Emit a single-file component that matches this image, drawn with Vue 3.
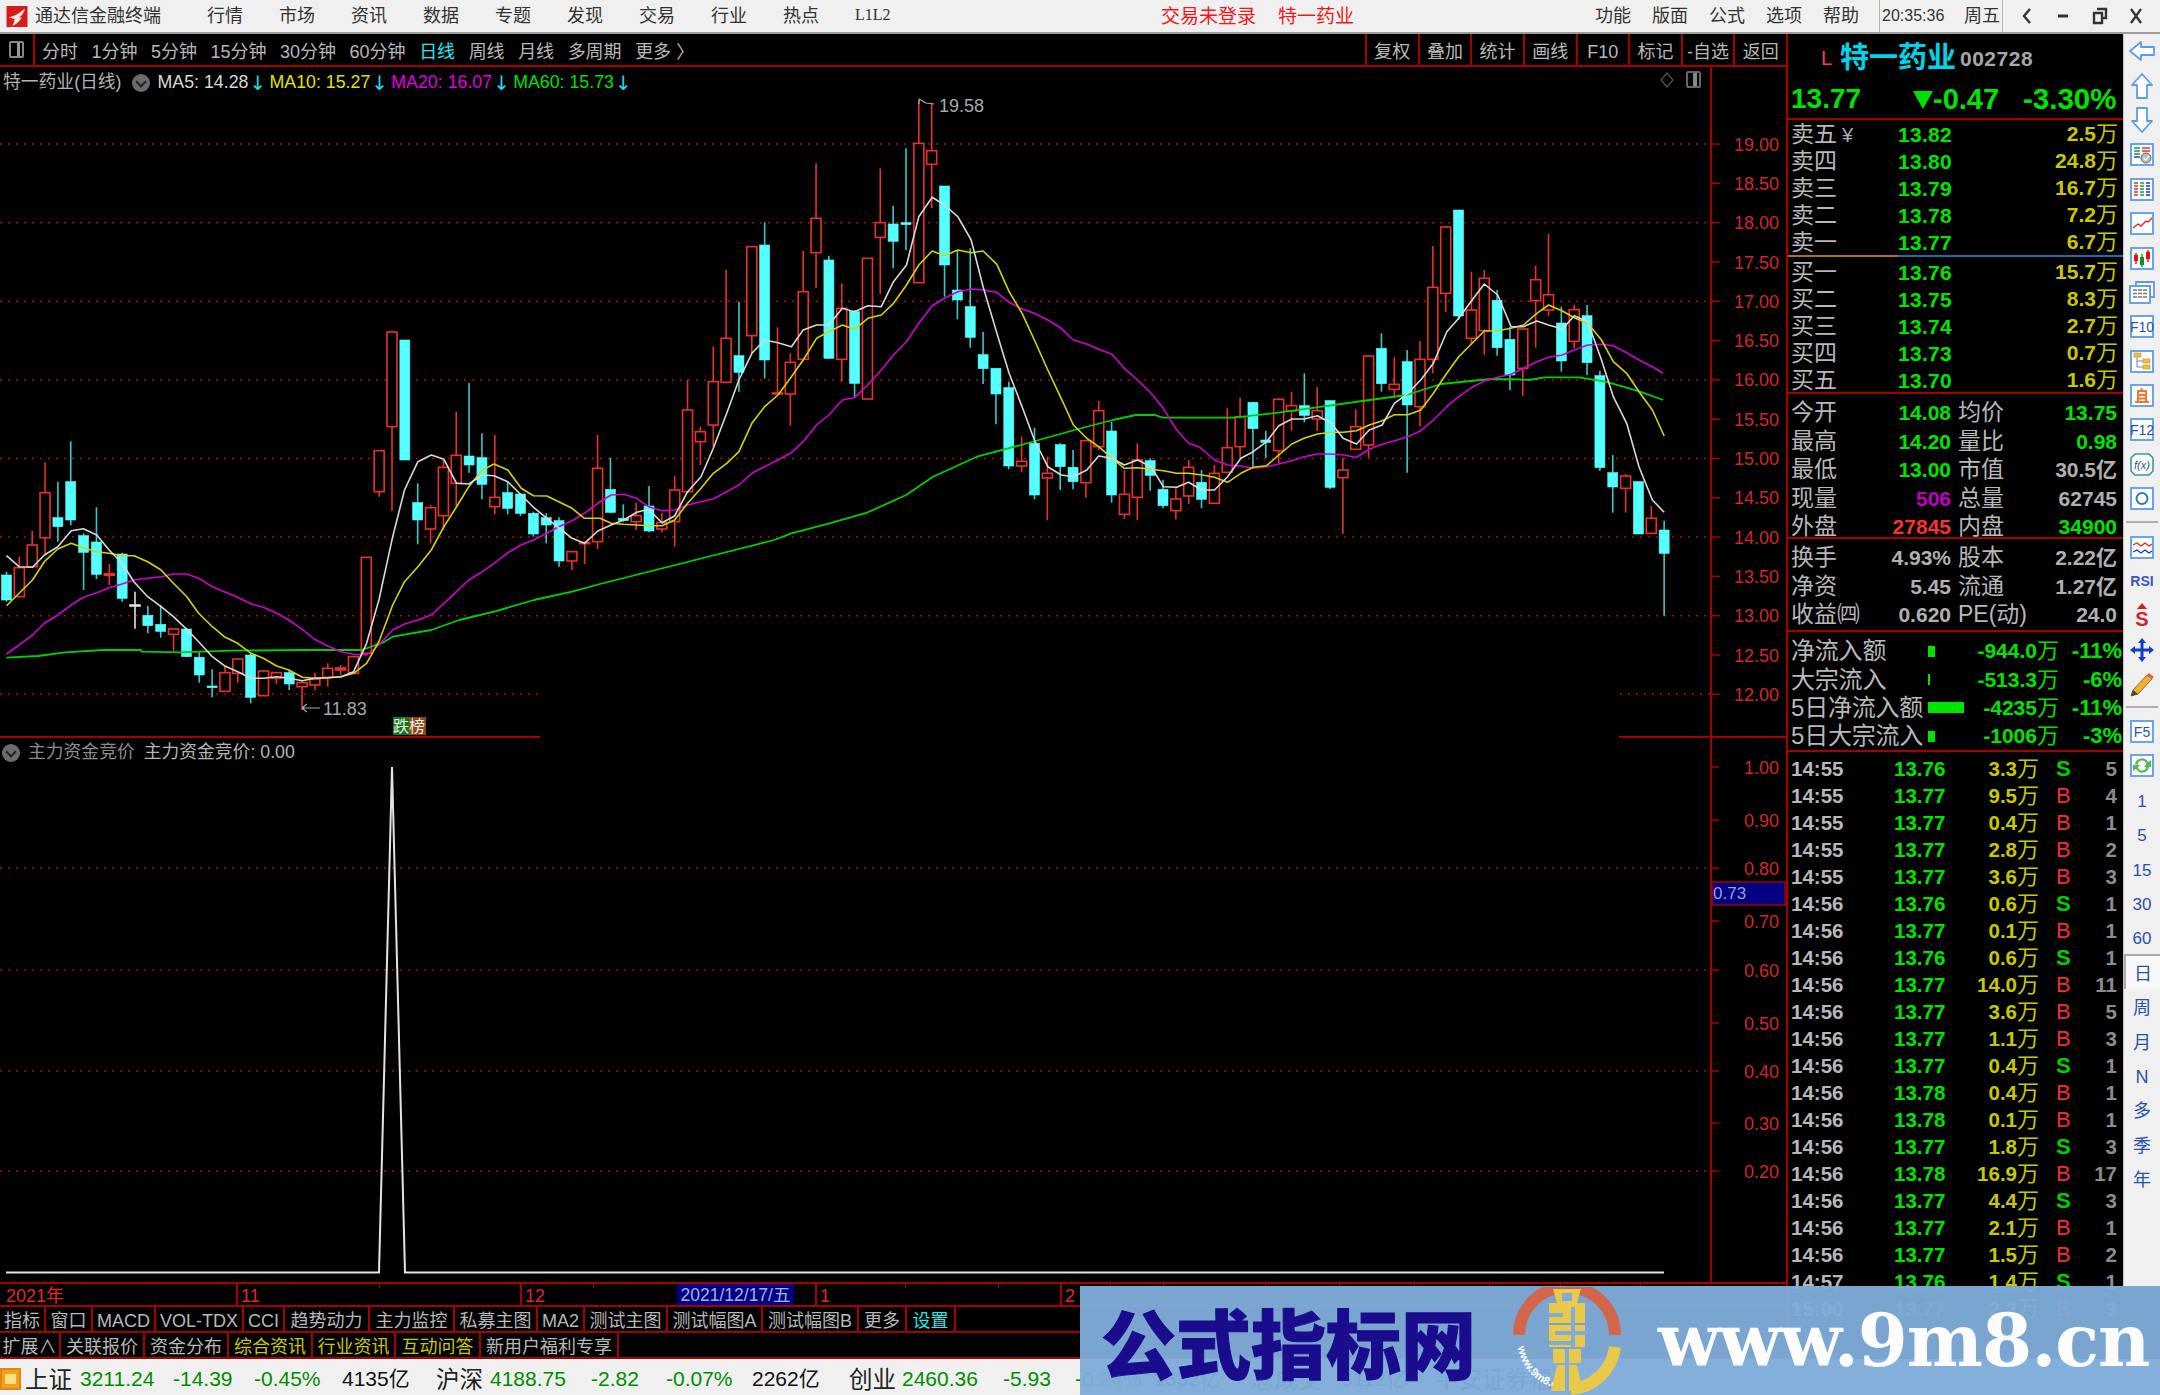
<script setup>
const candleX = (i) => 6.5 + 12.85 * i;
const sx = 1 / 2.613;

// [type, high, top, bottom, low] read per crop; r = up, c = down, w = flat
const part1 = [
  ["c",515,525,600,605],["r",470,503,590,590],["r",393,435,500,500],["r",187,278,413,462],["c",245,353,380,425],
  ["c",124,245,360,375],["c",400,407,457,570],["c",322,426,523,537],["f",492,521,526,555],["c",458,462,595,605],
  ["w",575,615,618,686],["c",618,646,677,700],["c",615,673,694,713],["r",687,687,703,755],["c",685,687,770,770],
  ["c",757,772,825,848],["c",808,858,863,892],["r",796,818,874,874],["r",777,777,820,848],["c",760,765,892,910],
  ["r",813,813,887,887],["r",818,818,835,852],["c",810,818,852,870],["r",843,848,860,930],["r",818,838,855,870],
  ["r",790,805,832,860],["f",795,804,810,825],["r",768,770,820,820],["r",472,472,760,765],["r",152,152,275,290],
  ["r",-204,-204,80,333],["c",-180,-180,180,180],["c",250,308,360,433],["r",315,323,387,430],["r",178,202,347,390],
  ["r",35,166,250,320],["c",-51,168,195,218],["c",100,173,253,298],["r",105,292,320,343],["c",245,278,325,343],
  ["c",280,282,340,348],["c",335,340,402,410],["c",340,353,375,430],["c",352,362,483,500],["r",455,455,483,510],
  ["f",425,427,431,492],["r",105,205,425,447],
];
const part2 = [
  ["c",1133,1228,1297,1300],["c",1273,1315,1322,1325],["r",1268,1307,1325,1350],["c",1218,1278,1353,1357],
  ["r",1300,1328,1347,1357],["r",1187,1230,1325,1400],["r",900,990,1235,1240],["r",1040,1055,1085,1155],
  ["r",800,905,1035,1100],["r",570,775,907,910],["c",665,827,877,935],["r",500,500,767,820],["c",427,495,840,895],
  ["f",742,939,942,942],["r",820,847,942,1037],["r",513,635,838,840],["r",250,415,518,623],["c",527,540,835,835],
  ["r",610,685,838,905],["c",690,695,910,953],["r",535,535,957,957],["r",265,428,472,642],["c",377,432,484,565],
  ["c",205,428,434,510],["r",60,190,608,608],["r",70,212,253,385],["c",318,318,555,650],["c",510,630,660,718],
  ["c",505,680,772,803],["c",755,824,866,912],["c",865,865,942,1033],["c",905,923,1158,1168],["r",1070,1144,1158,1177],
  ["c",1043,1090,1245,1258],["r",1130,1180,1194,1320],["c",1090,1094,1160,1230],["c",1110,1162,1205,1228],
  ["r",1080,1082,1208,1253],["r",963,992,1100,1110],["c",1025,1053,1245,1268],["r",1170,1243,1303,1317],
  ["r",1090,1140,1252,1320],["c",1135,1142,1186,1232],["c",1200,1228,1277,1285],["r",1225,1257,1292,1318],
  ["r",1140,1162,1248,1272],
];
const part3 = [
  ["c",870,907,958,985],["r",855,880,970,970],["r",685,803,877,877],["r",653,710,800,835],["c",665,667,746,860],
  ["c",752,780,787,833],["r",655,658,812,850],["r",635,677,693,752],["c",580,677,706,727],["r",622,692,717,752],
  ["c",662,662,922,927],["r",833,870,893,1062],["r",688,740,808,808],["r",525,528,795,832],["c",460,505,611,635],
  ["r",532,613,628,655],["c",510,545,675,878],["r",483,538,680,738],["r",198,322,538,580],["r",138,141,340,397],
  ["c",90,90,408,420],["r",275,390,475,495],["r",270,295,452,525],["c",330,361,503,527],["c",440,478,585,630],
  ["r",447,447,565,647],["r",257,299,362,503],["r",162,344,390,408],["c",380,429,543,575],["r",375,389,484,505],
  ["c",375,407,548,585],["c",572,587,863,873],["c",825,878,921,998],["r",882,888,925,998],["c",905,905,1062,1062],
  ["r",978,1015,1060,1060],["c",1022,1050,1120,1307],
];
const scaleRows = (rows, y0) => rows.map(([t, a, b, c, d]) => [t, a / 3 + y0, b / 3 + y0, c / 3 + y0, d / 3 + y0]);
const candles = [...scaleRows(part1, 400), ...scaleRows(part2, 80), ...scaleRows(part3, 180)].map((r, i) => ({
  x: candleX(i),
  type: r[0],
  high: r[1],
  top: r[2],
  bottom: r[3],
  low: r[4],
}));

const pts = (x0, y0, list) => {
  const out = [];
  for (let i = 0; i < list.length; i += 2) out.push((x0 + list[i] * sx).toFixed(1) + "," + (y0 + list[i + 1] / 3).toFixed(1));
  return out.join(" ");
};
const line = (a, b, c) => pts(0, 400, a) + " " + pts(600, 80, b) + " " + pts(1200, 180, c);

const ma5 = line(
  [17,467,50,500,85,502,116,465,151,440,186,392,218,386,253,405,285,450,319,490,350,545,386,590,421,620,453,650,488,688,519,725,555,770,586,797,621,815,656,835,688,835,723,830,755,835,790,842,821,835,856,833,891,830,924,815,958,730,990,600,1026,410,1057,270,1092,185,1127,165,1160,178,1193,250,1225,252,1260,225,1291,227,1327,245,1362,285,1394,322,1429,355,1460,383,1495,415,1527,430,1562,393],
  [29,1335,62,1320,96,1297,127,1288,162,1328,195,1308,229,1235,264,1190,296,1105,331,1000,363,900,397,820,430,780,465,788,500,800,531,750,566,735,598,735,633,685,665,695,700,677,735,680,767,605,801,555,833,410,868,352,900,375,935,410,970,480,1001,620,1037,760,1069,880,1103,980,1135,1080,1170,1160,1205,1185,1237,1190,1272,1170,1303,1128,1338,1135,1370,1155,1405,1140,1440,1160,1472,1220,1507,1222,1538,1207],
  [5,930,38,930,72,890,107,835,139,815,174,785,206,737,240,717,272,717,307,707,343,730,374,775,409,792,442,750,476,735,508,670,543,640,577,600,610,550,645,455,676,415,711,360,743,312,778,345,813,440,845,440,880,423,911,435,947,447,978,407,1013,425,1049,540,1080,650,1115,730,1147,860,1182,960,1213,997]
);
const ma10 = line(
  [17,617,50,580,85,540,116,485,151,447,186,430,218,443,253,455,285,460,319,467,350,467,386,485,421,510,453,550,488,590,519,640,555,680,586,710,621,730,656,760,688,775,723,798,755,810,790,832,821,835,856,833,891,830,924,820,958,790,990,725,1026,615,1057,545,1092,500,1127,450,1160,380,1193,320,1225,260,1260,210,1291,192,1327,210,1362,265,1394,287,1429,288,1460,305,1495,325,1527,355,1568,355],
  [29,1330,62,1333,96,1335,127,1337,162,1337,195,1320,229,1270,264,1225,296,1180,331,1150,363,1115,397,1030,430,980,465,945,500,890,531,840,566,775,598,755,633,735,665,748,700,715,735,705,767,670,801,615,833,555,868,513,900,527,935,510,970,518,1001,513,1037,553,1069,635,1103,700,1135,780,1170,870,1205,955,1237,1035,1272,1075,1303,1100,1338,1135,1370,1165,1405,1163,1440,1168,1472,1172,1507,1180,1538,1180],
  [5,885,38,892,72,907,107,880,139,862,174,857,206,825,240,792,272,775,307,762,343,757,374,757,409,752,442,735,476,722,508,704,543,704,577,690,610,640,645,580,676,530,711,490,743,453,778,452,813,445,845,435,880,400,911,375,947,393,978,413,1013,430,1049,480,1080,545,1115,580,1147,635,1182,690,1213,768]
);
const ma20 = line(
  [17,762,50,735,85,705,116,670,151,645,186,615,218,592,253,578,285,563,319,552,350,540,386,535,421,530,453,522,488,522,519,535,555,560,586,575,621,592,656,612,688,622,723,640,755,660,790,688,821,717,856,738,891,755,924,763,958,765,990,735,1026,690,1057,672,1092,660,1127,645,1160,610,1193,575,1225,540,1260,515,1291,490,1327,458,1362,435,1394,420,1429,400,1460,380,1495,362,1527,340,1568,305],
  [29,1245,62,1243,96,1255,127,1280,162,1292,195,1290,229,1275,264,1265,296,1257,331,1235,363,1215,397,1180,430,1160,465,1140,500,1118,531,1085,566,1035,598,1005,633,960,665,953,700,915,735,870,767,825,801,785,833,730,868,677,900,655,935,635,970,627,1001,630,1037,637,1069,667,1103,687,1135,700,1170,720,1205,745,1237,780,1272,792,1303,808,1338,823,1370,865,1405,900,1440,940,1472,985,1507,1050,1538,1090],
  [0,802,38,840,72,855,107,858,139,865,174,860,206,852,240,842,272,830,307,822,343,822,374,825,409,832,442,808,476,793,508,782,543,770,577,752,610,720,645,680,676,650,711,622,743,603,778,592,813,583,845,565,880,545,911,532,947,525,978,510,1013,495,1049,493,1080,497,1115,518,1147,540,1182,560,1210,580]
);
const ma60 = line(
  [17,773,100,768,170,757,268,750,368,750,370,755,470,757,605,752,800,750,945,750,1000,728,1026,710,1127,690,1200,660,1291,635,1395,600,1495,575,1568,552],
  [455,1380,500,1360,600,1330,700,1297,800,1245,870,1190,985,1130,1100,1095,1240,1050,1340,1020,1400,1005,1450,1005,1470,1013,1568,1013],
  [0,713,90,713,190,700,300,683,424,663,540,645,630,612,760,597,830,598,860,600,900,592,990,592,1060,605,1150,635,1210,660]
);

const priceY = (p) => 615.7 - (p - 13) * 78.6;
const upperAxis = ["19.00","18.50","18.00","17.50","17.00","16.50","16.00","15.50","15.00","14.50","14.00","13.50","13.00","12.50","12.00"].map((t) => ({ t, y: priceY(+t) }));
const upperGrid = [19, 18, 17, 16, 15, 14, 13].map(priceY);
const lowerAxis = [["1.00",767],["0.90",820],["0.80",868],["0.70",921],["0.60",970],["0.50",1023],["0.40",1071],["0.30",1123],["0.20",1171]];
const lowerGrid = [868, 970, 1071, 1171];

const periods = [["分时"],["1分钟"],["5分钟"],["15分钟"],["30分钟"],["60分钟"],["日线",true],["周线"],["月线"],["多周期"]];
const tools = ["复权","叠加","统计","画线","F10","标记","-自选","返回"];
const menus = ["行情","市场","资讯","数据","专题","发现","交易","行业","热点"];
const sideMenus = ["功能","版面","公式","选项","帮助"];

const sells = [["卖五","13.82","2.5"],["卖四","13.80","24.8"],["卖三","13.79","16.7"],["卖二","13.78","7.2"],["卖一","13.77","6.7"]];
const buys = [["买一","13.76","15.7"],["买二","13.75","8.3"],["买三","13.74","2.7"],["买四","13.73","0.7"],["买五","13.70","1.6"]];
const statsA = [
  ["今开","14.08","g","均价","13.75","g"],
  ["最高","14.20","g","量比","0.98","g"],
  ["最低","13.00","g","市值","30.5亿","n"],
  ["现量","506","m","总量","62745","n"],
  ["外盘","27845","r","内盘","34900","g"],
];
const statsB = [
  ["换手","4.93%","n","股本","2.22亿","n"],
  ["净资","5.45","n","流通","1.27亿","n"],
  ["收益㈣","0.620","n","PE(动)","24.0","n"],
];
const flows = [
  ["净流入额",7,"-944.0","-11%"],
  ["大宗流入",2,"-513.3","-6%"],
  ["5日净流入额",36,"-4235","-11%"],
  ["5日大宗流入",7,"-1006","-3%"],
];
const ticks = [
  ["14:55","13.76","3.3","S","5"],["14:55","13.77","9.5","B","4"],["14:55","13.77","0.4","B","1"],["14:55","13.77","2.8","B","2"],
  ["14:55","13.77","3.6","B","3"],["14:56","13.76","0.6","S","1"],["14:56","13.77","0.1","B","1"],["14:56","13.76","0.6","S","1"],
  ["14:56","13.77","14.0","B","11"],["14:56","13.77","3.6","B","5"],["14:56","13.77","1.1","B","3"],["14:56","13.77","0.4","S","1"],
  ["14:56","13.78","0.4","B","1"],["14:56","13.78","0.1","B","1"],["14:56","13.77","1.8","S","3"],["14:56","13.78","16.9","B","17"],
  ["14:56","13.77","4.4","S","3"],["14:56","13.77","2.1","B","1"],["14:56","13.77","1.5","B","2"],["14:57","13.76","1.4","S","1"],
  ["15:00","13.77","2.2","B","3"],
];

const tabsA = [["指标",46],["窗口",47],["MACD",63],["VOL-TDX",88],["CCI",41],["趋势动力",85],["主力监控",85],["私募主图",83],["MA2",47],["测试主图",83],["测试幅图A",95],["测试幅图B",96],["更多",48],["设置",49,"cy"]];
const tabsB = [["扩展∧",61],["关联报价",84],["资金分布",84],["综合资讯",84,"ye"],["行业资讯",83,"ye"],["互动问答",85,"ye"],["新用户福利专享",138]];
const dateTicks = [379,593,905,998,1110,1163,1265,1339,1414,1489,1560,1640];

const status = [
  ["上证",55,"cn"],["3211.24",93,"up"],["-14.39",81,"up"],["-0.45%",88,"up"],["4135亿",94,"bk"],["沪深",54,"cn"],
  ["4188.75",101,"up"],["-2.82",75,"up"],["-0.07%",86,"up"],["2262亿",97,"bk"],["创业",53,"cn"],["2460.36",101,"up"],
  ["-5.93",72,"up"],["-0.24%",78,"up"],["1632亿",98,"bk"],["总成交",90,"cn"],["3112亿",94,"bk"],["平安证券福利",200,"cn"],
];
const sideText = ["1","5","15","30","60"];
const sideText2 = ["周","月","N","多","季","年"];
</script>

<template>
  <div class="app">
    <div class="menubar">
      <svg class="logo" viewBox="0 0 26 26">
        <rect width="26" height="26" fill="#d81c1c" />
        <path d="M3 14 C9 13 16 9 23 3 C21 9 19 12 15 15 L19 14 C16 20 11 23 7 25 C9 21 10 18 10 16 Z" fill="#f6e8e0" />
      </svg>
      <span class="appname">通达信金融终端</span>
      <div class="menus">
        <span v-for="m in menus" :key="m">{{ m }}</span>
        <span class="l1l2">L1L2</span>
      </div>
      <div class="notice">
        <span>交易未登录</span>
        <span>特一药业</span>
      </div>
      <div class="sidemenus">
        <span v-for="m in sideMenus" :key="m">{{ m }}</span>
      </div>
      <div class="clock"><span class="time">20:35:36</span><span>周五</span></div>
      <div class="winbtns">
        <svg viewBox="0 0 14 20"><path d="M10 3 L4 10 L10 17" fill="none" stroke="#333" stroke-width="2.4" /></svg>
        <svg viewBox="0 0 14 20"><path d="M2 10 H12" stroke="#333" stroke-width="3" /></svg>
        <svg viewBox="0 0 16 20"><path d="M5 3 H14 V12 H11 M2 7 H10 V17 H2 Z" fill="none" stroke="#333" stroke-width="2.4" /></svg>
        <svg viewBox="0 0 14 20"><path d="M2 3 L12 17 M12 3 L2 17" stroke="#333" stroke-width="2.2" /></svg>
      </div>
    </div>

    <div class="body">
      <div class="workspace">
        <div class="toolbar">
          <div class="tb-icon"><i></i></div>
          <div class="periods">
            <span v-for="p in periods" :key="p[0]" :class="{ active: p[1] }">{{ p[0] }}</span>
            <span>更多 〉</span>
          </div>
          <div class="tools">
            <span v-for="t in tools" :key="t">{{ t }}</span>
          </div>
        </div>

        <div class="charts">
          <svg class="canvas" width="1787" height="1215" viewBox="0 67 1787 1215">
            <g stroke="#a81010" stroke-width="1.5" stroke-dasharray="2 6">
              <line v-for="y in upperGrid" :key="y" x1="0" x2="1711" :y1="y" :y2="y" />
              <line x1="0" x2="540" :y1="priceY(12)" :y2="priceY(12)" />
              <line x1="1620" x2="1711" :y1="priceY(12)" :y2="priceY(12)" />
              <line v-for="y in lowerGrid" :key="y" x1="0" x2="1711" :y1="y" :y2="y" />
            </g>
            <g v-for="(c, i) in candles" :key="i" :class="'k-' + c.type">
              <line class="wick" :x1="c.x" :x2="c.x" :y1="c.high" :y2="c.low" />
              <rect class="bar" :x="c.x - 5" :y="c.top" width="10" :height="c.bottom - c.top" />
            </g>
            <polyline class="ma g60" :points="ma60" />
            <polyline class="ma m20" :points="ma20" />
            <polyline class="ma y10" :points="ma10" />
            <polyline class="ma w5" :points="ma5" />

            <path d="M919 99 V104 M919 99 L926 103 L934 104" fill="none" stroke="#aaa" stroke-width="1.2" />
            <text class="mark" x="939" y="112">19.58</text>
            <path d="M302 708 H320 M302 708 L307 704 M302 708 L307 712" fill="none" stroke="#aaa" stroke-width="1.2" />
            <text class="mark" x="323" y="715">11.83</text>

            <rect x="393" y="717" width="16" height="18" fill="#0f7a16" />
            <rect x="409" y="717" width="17" height="18" fill="#8a4a12" />
            <text class="badge" x="393" y="732">跌</text>
            <text class="badge" x="409" y="732">榜</text>

            <polyline class="peak" points="6,1272.5 379,1272.5 392,767 405,1272.5 1664,1272.5" />

            <g stroke="#a80000" stroke-width="2" fill="none">
              <line x1="1711" x2="1711" y1="67" y2="1282" />
              <line x1="0" x2="540" y1="737" y2="737" />
              <line x1="1619" x2="1787" y1="737" y2="737" />
            </g>
            <g stroke="#a80000" stroke-width="1.5">
              <line v-for="a in upperAxis" :key="a.t" x1="1711" x2="1720" :y1="a.y" :y2="a.y" />
              <line v-for="a in lowerAxis" :key="a[0]" x1="1711" x2="1719" :y1="a[1]" :y2="a[1]" />
            </g>
            <text v-for="a in upperAxis" :key="a.t" class="ax" x="1779" :y="a.y + 6.5">{{ a.t }}</text>
            <text v-for="a in lowerAxis" :key="a[0]" class="ax" x="1779" :y="a[1] + 6.5">{{ a[0] }}</text>
            <rect x="1712" y="882" width="73" height="23" fill="#000080" stroke="#a80000" stroke-width="1.5" />
            <text class="cur" x="1713" y="899">0.73</text>
          </svg>

          <div class="legend">
            <span class="stock">特一药业(日线)</span>
            <i class="chev"></i>
            <span class="c-white">MA5: 14.28</span><b class="down">↓</b>
            <span class="c-yellow">MA10: 15.27</span><b class="down">↓</b>
            <span class="c-magenta">MA20: 16.07</span><b class="down">↓</b>
            <span class="c-green">MA60: 15.73</span><b class="down">↓</b>
          </div>
          <div class="pane-icons">
            <svg width="14" height="16" viewBox="0 0 14 16"><path d="M7 1 L13 8 L7 15 L1 8 Z" fill="none" stroke="#555" stroke-width="1.2" /></svg>
            <span class="pane-btn"><i></i></span>
          </div>
          <div class="legend lower">
            <i class="chev"></i>
            <span class="dim">主力资金竞价</span>
            <span class="stock">主力资金竞价: 0.00</span>
          </div>
        </div>

        <div class="dateaxis">
          <span class="d1">2021年</span>
          <span class="d2">11</span>
          <span class="d3">12</span>
          <span class="dbox">2021/12/17/五</span>
          <span class="d4"></span>
          <span class="d5">1</span>
          <span class="d6">2</span>
          <i v-for="t in dateTicks" :key="t" class="dtick" :style="{ left: t + 'px' }"></i>
        </div>
        <div class="tabs">
          <span v-for="t in tabsA" :key="t[0]" :class="t[2]" :style="{ width: t[1] + 'px' }">{{ t[0] }}</span>
        </div>
        <div class="tabs">
          <span v-for="t in tabsB" :key="t[0]" :class="t[2]" :style="{ width: t[1] + 'px' }">{{ t[0] }}</span>
        </div>
      </div>

      <div class="panel">
        <div class="p-head">
          <div class="p-name"><span class="lv">L</span><span class="nm">特一药业</span><span class="code">002728</span></div>
          <div class="p-price">
            <span class="last">13.77</span>
            <svg class="tri" width="20" height="18" viewBox="0 0 20 18"><path d="M0 0 H20 L10 18 Z" fill="#00e000" /></svg>
            <span class="chg">-0.47</span>
            <span class="pct">-3.30%</span>
          </div>
        </div>
        <div class="p-quote">
          <div v-for="(r, i) in sells" :key="r[0]" class="q-row">
            <span class="lb">{{ r[0] }}<em v-if="i === 0">¥</em></span>
            <span class="pr">{{ r[1] }}</span>
            <span class="vol">{{ r[2] }}<u>万</u></span>
          </div>
        </div>
        <div class="p-split"><i></i><b></b></div>
        <div class="p-quote sec">
          <div v-for="r in buys" :key="r[0]" class="q-row">
            <span class="lb">{{ r[0] }}</span>
            <span class="pr">{{ r[1] }}</span>
            <span class="vol">{{ r[2] }}<u>万</u></span>
          </div>
        </div>
        <div class="p-stats sec">
          <div v-for="r in statsA" :key="r[0]" class="s-row">
            <span class="lb">{{ r[0] }}</span>
            <span class="v1" :class="r[2]">{{ r[1] }}</span>
            <span class="lb l2">{{ r[3] }}</span>
            <span class="v2" :class="r[5]">{{ r[4] }}</span>
          </div>
        </div>
        <div class="p-stats sec short">
          <div v-for="r in statsB" :key="r[0]" class="s-row">
            <span class="lb">{{ r[0] }}</span>
            <span class="v1" :class="r[2]">{{ r[1] }}</span>
            <span class="lb l2">{{ r[3] }}</span>
            <span class="v2" :class="r[5]">{{ r[4] }}</span>
          </div>
        </div>
        <div class="p-flows sec">
          <div v-for="f in flows" :key="f[0]" class="f-row">
            <span class="lb">{{ f[0] }}</span>
            <span class="f-bar"><i :style="{ width: f[1] + 'px' }"></i></span>
            <span class="f-val">{{ f[2] }}<u>万</u></span>
            <span class="f-pct">{{ f[3] }}</span>
          </div>
        </div>
        <div class="p-ticks sec">
          <div v-for="(t, i) in ticks" :key="i" class="t-row">
            <span class="tm">{{ t[0] }}</span>
            <span class="tp">{{ t[1] }}</span>
            <span class="tv">{{ t[2] }}<u>万</u></span>
            <span class="ts" :class="t[3]">{{ t[3] }}</span>
            <span class="tc">{{ t[4] }}</span>
          </div>
        </div>
      </div>

      <div class="sidebar">
        <div class="slot"><svg viewBox="0 0 28 28"><path class="out" d="M2 14 L13 5 V10 H26 V18 H13 V23 Z" /></svg></div>
        <div class="slot"><svg viewBox="0 0 28 28"><path class="out" d="M14 2 L24 13 H19 V26 H9 V13 H4 Z" /></svg></div>
        <div class="slot"><svg viewBox="0 0 28 28"><path class="out" d="M14 26 L24 15 H19 V2 H9 V15 H4 Z" /></svg></div>
        <div class="slot"><svg viewBox="0 0 28 28"><rect class="fr" x="3" y="4" width="22" height="21" />
          <path d="M6 8 H12 M6 11 H12 M6 14 H12" stroke="#1a9a3a" stroke-width="1.6" /><path d="M14 8 H22 M14 11 H22" stroke="#e03030" stroke-width="1.6" /><path d="M6 17 H12" stroke="#3050d0" stroke-width="1.6" />
          <circle cx="18" cy="18" r="5" fill="#bbb" stroke="#666" /><path d="M15.5 18 L17.5 20 L21 16" fill="none" stroke="#fff" stroke-width="1.2" /></svg></div>
        <div class="slot"><svg viewBox="0 0 28 28"><rect class="fr" x="3" y="4" width="22" height="21" />
          <path d="M6 8 H10 M6 11 H10 M6 14 H10 M6 17 H10 M6 20 H10" stroke="#e03030" stroke-width="1.6" /><path d="M12 8 H16 M12 11 H16 M12 14 H16 M12 17 H16 M12 20 H16" stroke="#1a9a3a" stroke-width="1.6" /><path d="M18 8 H22 M18 11 H22 M18 14 H22 M18 17 H22 M18 20 H22" stroke="#2030e0" stroke-width="1.6" /></svg></div>
        <div class="slot"><svg viewBox="0 0 28 28"><rect class="fr" x="3" y="4" width="22" height="21" /><path d="M5 19 L10 15 L13 17 L18 12 L20 13 L24 9" fill="none" stroke="#e02020" stroke-width="1.4" /></svg></div>
        <div class="slot"><svg viewBox="0 0 28 28"><rect class="fr" x="3" y="4" width="22" height="21" />
          <path d="M8 9 V20 M20 6 V18" stroke="#e01010" stroke-width="1.4" /><path d="M14 10 V23" stroke="#109030" stroke-width="1.4" />
          <rect x="6" y="11" width="4" height="6" fill="#e01010" /><rect x="12" y="13" width="4" height="8" fill="#109030" /><rect x="18" y="8" width="4" height="7" fill="#e01010" /></svg></div>
        <div class="slot"><svg viewBox="0 0 28 28"><path class="fr" d="M8 4 H26 V19 H22 V8 H8 Z" /><rect class="fr" x="2" y="8" width="20" height="17" />
          <path d="M5 12 H19 M5 15.500 H19 M5 19 H19" stroke="#777" stroke-width="1.6" stroke-dasharray="4 1" /></svg></div>
        <div class="slot"><svg viewBox="0 0 28 28"><rect class="fr" x="3" y="4" width="22" height="21" /><text class="ic-t" x="14" y="20">F10</text></svg></div>
        <div class="slot"><svg viewBox="0 0 28 28"><rect class="fr" x="3" y="4" width="22" height="21" />
          <rect x="6" y="6" width="7" height="4" fill="#f0c030" stroke="#c09020" stroke-width=".6" /><rect x="15" y="12" width="7" height="4" fill="#f0c030" stroke="#c09020" stroke-width=".6" /><rect x="15" y="18" width="7" height="4" fill="#f0c030" stroke="#c09020" stroke-width=".6" />
          <path d="M9 10 V20 H15 M9 14 H15" fill="none" stroke="#6a88c8" /></svg></div>
        <div class="slot"><svg viewBox="0 0 28 28"><rect class="fr" x="3" y="4" width="22" height="21" /><path d="M10 10 H18 V21 H10 Z M10 14 H18 M10 17.500 H18 M14 7 L13 10 M7 21 H21" fill="none" stroke="#f07830" stroke-width="2" /></svg></div>
        <div class="slot"><svg viewBox="0 0 28 28"><rect class="fr" x="3" y="4" width="22" height="21" /><text class="ic-t" x="14" y="20">F12</text></svg></div>
        <div class="slot"><svg viewBox="0 0 28 28"><path d="M7 4 H21 L25 8 V21 L21 25 H7 L3 21 V8 Z" fill="#fff" stroke="#3a9a98" stroke-width="1.6" /><text class="ic-f" x="14" y="19">f(x)</text></svg></div>
        <div class="slot"><svg viewBox="0 0 28 28"><rect class="fr" x="3" y="4" width="22" height="21" /><circle cx="14" cy="14.500" r="5.500" fill="none" stroke="#2a78c8" stroke-width="2" /></svg></div>
        <div class="divider"></div>
        <div class="slot"><svg viewBox="0 0 28 28"><rect class="fr" x="3" y="4" width="22" height="21" /><path d="M5 12 L9 10 L13 13 L17 10 L21 13 L24 11" fill="none" stroke="#e02020" stroke-width="1.3" /><path d="M5 19 L9 17 L13 20 L17 17 L21 20 L24 18" fill="none" stroke="#2030d0" stroke-width="1.3" /></svg></div>
        <div class="slot"><svg viewBox="0 0 28 28"><text class="ic-rsi" x="14" y="19">RSI</text></svg></div>
        <div class="slot"><svg viewBox="0 0 28 28"><path d="M14 2 L19 8 H9 Z" fill="#d02020" /><text class="ic-s" x="14" y="25">S</text></svg></div>
        <div class="slot"><svg viewBox="0 0 28 28"><path d="M14 2 L18 7 H15.500 V12.500 H21 V10 L26 14 L21 18 V15.500 H15.500 V21 H18 L14 26 L10 21 H12.500 V15.500 H7 V18 L2 14 L7 10 V12.500 H12.500 V7 H10 Z" fill="#1040c0" /></svg></div>
        <div class="slot"><svg viewBox="0 0 28 28"><path d="M5 20 L19 5 L24 9 L10 24 L3 26 Z" fill="#f0b030" stroke="#a06818" /><path d="M19 5 L21 3 L26 7 L24 9 Z" fill="#e06060" /><path d="M3 26 L5 20 L10 24 Z" fill="#444" /></svg></div>
        <div class="divider small"></div>
        <div class="slot"><svg viewBox="0 0 28 28"><rect class="fr" x="3" y="4" width="22" height="21" /><text class="ic-t" x="14" y="20">F5</text></svg></div>
        <div class="slot"><svg viewBox="0 0 28 28"><rect class="fr" x="3" y="4" width="22" height="21" /><path d="M7 13 A7 7 0 0 1 20 11 L23 9 V16 H16 L18 13 A4 4 0 0 0 10 14 Z M21 16 A7 7 0 0 1 8 18 L5 20 V14 H12 L10 16 A4 4 0 0 0 18 15 Z" fill="#58b858" /></svg></div>
        <div v-for="t in sideText" :key="t" class="slot txt">{{ t }}</div>
        <div class="slot txt day">日</div>
        <div v-for="t in sideText2" :key="t" class="slot txt cn">{{ t }}</div>
      </div>
    </div>

    <div class="statusbar">
      <span class="st-icon"><i></i></span>
      <span v-for="s in status" :key="s[0]" :class="s[2]" :style="{ width: s[1] + 'px' }">{{ s[0] }}</span>
    </div>

    <div class="banner">
      <span class="b-cn">公式指标网</span>
      <svg class="b-logo" width="108" height="108" viewBox="0 0 108 108">
        <defs><path id="arc" d="M5 60 A50 50 0 0 0 48 102" /></defs>
        <path d="M6 48 A48 48 0 0 1 102 48" fill="none" stroke="#d2654c" stroke-width="12" />
        <path d="M102 60 A48 48 0 0 1 58 102" fill="none" stroke="#e9c94a" stroke-width="12" />
        <text class="b-arc"><textPath href="#arc">www.9m8.cn</textPath></text>
        <path d="M40 2 H68 L64 16 H72 V36 H36 V16 H44 Z" fill="#e9c94a" />
        <path d="M36 38 H72 V60 H36 Z M40 62 H68 V76 H40 Z M44 78 H64 L70 104 H38 Z" fill="#e9c94a" />
        <path d="M49 6 H59 V14 H49 Z M36 26 H50 V30 H36 Z M58 20 H62 V60 H58 Z M42 44 H72 V48 H42 Z M36 54 H60 V58 H36 Z M52 62 H56 V104 H52 Z" fill="#7facd9" />
      </svg>
      <span class="b-url">www.9m8.cn</span>
    </div>
  </div>
</template>

<style scoped>
.app {
  position: relative;
  width: 2160px;
  height: 1395px;
  overflow: hidden;
  display: flex;
  flex-direction: column;
  background: #000;
  font-family: "Liberation Sans", "Noto Sans CJK SC", sans-serif;
  line-height: 1;
}
u, em, i { text-decoration: none; font-style: normal; }

.menubar {
  height: 34px;
  box-sizing: border-box;
  background: #f0f0f0;
  border-bottom: 2px solid #9c9c9c;
  display: flex;
  align-items: center;
  color: #333;
  font-size: 18px;
}
.logo { width: 26px; height: 21px; margin-left: 4px; flex: none; }
.appname { margin-left: 5px; width: 172px; flex: none; }
.menus { display: flex; gap: 36px; width: 954px; flex: none; }
.l1l2 { font-family: "Liberation Serif", serif; font-size: 16px; }
.notice { display: flex; gap: 22px; width: 434px; flex: none; color: #f01818; font-size: 19px; }
.sidemenus { display: flex; gap: 21px; width: 284px; flex: none; }
.clock {
  height: 32px;
  display: flex;
  align-items: center;
  gap: 8px;
  padding: 0 2px;
  width: 124px;
  flex: none;
  white-space: nowrap;
  box-sizing: border-box;
  border-left: 1px solid #b4b4b4;
  border-right: 1px solid #b4b4b4;
}
.time { font-size: 16px; width: 74px; flex: none; }
.winbtns { display: flex; align-items: center; justify-content: space-around; flex: 1; padding: 0 6px; }
.winbtns svg { height: 20px; width: 16px; }

.body { display: flex; height: 1325px; }
.workspace { width: 1786px; flex: none; display: flex; flex-direction: column; }
.toolbar {
  height: 33px;
  box-sizing: border-box;
  border-bottom: 2px solid #a80000;
  display: flex;
  align-items: center;
  color: #b8b8b8;
  font-size: 18px;
}
.tb-icon {
  width: 35px;
  height: 31px;
  box-sizing: border-box;
  border-right: 2px solid #a80000;
  display: flex;
  align-items: center;
  justify-content: center;
  flex: none;
}
.tb-icon i {
  width: 15px;
  height: 17px;
  box-sizing: border-box;
  border: 2px solid #888;
  border-radius: 2px;
  background: linear-gradient(90deg, #000 55%, #999 55%, #999 80%, #000 80%);
}
.periods { display: flex; gap: 13.5px; margin-left: 7px; width: 1323px; flex: none; padding-top: 5px; box-sizing: border-box; }
.periods .active { color: #28e8e8; }
.tools { display: flex; flex: 1; height: 31px; }
.tools span {
  flex: 1;
  display: flex;
  align-items: center;
  justify-content: center;
  border-left: 2px solid #a80000;
  box-sizing: border-box;
  padding-top: 5px;
}

.charts { position: relative; height: 1215px; }
.canvas { display: block; }
.wick { stroke-width: 1.6; }
.bar { stroke-width: 1.6; }
.k-r .wick, .k-f .wick { stroke: #e83228; }
.k-r .bar { stroke: #e83228; fill: #000; }
.k-f .bar { stroke: #e83228; fill: #e83228; }
.k-c .wick { stroke: #3cc8c8; }
.k-c .bar { fill: #54ffff; stroke: #54ffff; stroke-width: .6; }
.k-w .wick { stroke: #e0e0e0; }
.k-w .bar { fill: #e0e0e0; stroke: #e0e0e0; }
.ma { fill: none; stroke-width: 1.6; stroke-linejoin: round; }
.w5 { stroke: #d8d8d8; }
.y10 { stroke: #d4d400; }
.m20 { stroke: #d000d0; }
.g60 { stroke: #00d000; stroke-width: 1.8; }
.peak { fill: none; stroke: #e4e4e4; stroke-width: 2; }
.mark { fill: #a8a8a8; font-size: 18px; }
.badge { fill: #eee; font-size: 16px; }
.ax { fill: #d02828; font-size: 18px; text-anchor: end; }
.cur { fill: #9aa0d8; font-size: 17px; }

.legend {
  position: absolute;
  left: 3px;
  top: 4.5px;
  height: 22px;
  display: flex;
  align-items: center;
  font-size: 17.800px;
  white-space: nowrap;
}
.stock { color: #b4b4b4; }
.chev {
  width: 18px;
  height: 18px;
  margin: 0 8px 0 10px;
  border-radius: 50%;
  background: #6c6c6c;
  position: relative;
  flex: none;
}
.chev::after {
  content: "";
  position: absolute;
  left: 5px;
  top: 4px;
  width: 6px;
  height: 6px;
  border-right: 2px solid #222;
  border-bottom: 2px solid #222;
  transform: rotate(45deg);
}
.down { color: #28d8e8; font-size: 20px; font-weight: normal; width: 12px; margin: 0 8px 0 1px; font-family: "DejaVu Sans", sans-serif; }
.c-white { color: #d8d8d8; }
.c-yellow { color: #e0e000; }
.c-magenta { color: #e000e0; }
.c-green { color: #00e000; }
.lower { left: 0; top: 675px; gap: 0; }
.lower .chev { margin: 0 8px 0 2px; }
.dim { color: #8c8c8c; margin-right: 9px; }
.pane-icons {
  position: absolute;
  left: 1660px;
  top: 4px;
  display: flex;
  align-items: center;
  gap: 12px;
}
.pane-btn {
  width: 15px;
  height: 17px;
  box-sizing: border-box;
  border: 2px solid #666;
  border-radius: 2px;
  background: linear-gradient(90deg, #000 50%, #888 50%, #888 80%, #000 80%);
}

.dateaxis {
  position: relative;
  height: 25px;
  box-sizing: border-box;
  border-top: 2px solid #a80000;
  border-bottom: 2px solid #a80000;
  display: flex;
  align-items: center;
  color: #e02828;
  font-size: 18px;
}
.dateaxis span { height: 100%; display: flex; align-items: center; box-sizing: border-box; flex: none; padding-top: 3px; }
.d1 { width: 236px; padding-left: 6px; }
.d2 { width: 284px; border-left: 2px solid #a80000; padding-left: 3px; }
.d3 { width: 157px; border-left: 2px solid #a80000; padding-left: 3px; }
.dbox { width: 117px; background: #000080; color: #a8b0e8; justify-content: center; font-size: 17.500px; white-space: nowrap; }
.d4 { width: 21px; }
.d5 { width: 245px; border-left: 2px solid #a80000; padding-left: 3px; }
.d6 { width: 150px; border-left: 2px solid #a80000; padding-left: 3px; }
.dtick { position: absolute; top: 0; width: 1px; height: 4px; background: #a80000; }

.tabs {
  height: 26px;
  flex: none;
  box-sizing: border-box;
  border-bottom: 2px solid #a80000;
  display: flex;
  color: #b8b8b8;
  font-size: 18px;
}
.tabs span {
  box-sizing: border-box;
  border-right: 2px solid #a80000;
  display: flex;
  align-items: center;
  justify-content: center;
  white-space: nowrap;
  padding-top: 4px;
}
.cy { color: #28e8e8; }
.ye { color: #c8c800; }

.panel {
  width: 337px;
  flex: none;
  box-sizing: border-box;
  border-left: 2px solid #a80000;
  overflow: hidden;
  padding-left: 3px;
  color: #b8b8b8;
}
.sec { border-bottom: 2px solid #a80000; margin-left: -3px; padding-left: 3px; }
.p-head { border-bottom: 2px solid #a80000; margin-left: -3px; padding-left: 3px; height: 84px; }
.p-name { height: 46px; display: flex; align-items: center; padding: 2px 0 0 30px; box-sizing: border-box; }
.lv { color: #f04040; font-size: 20px; width: 19px; }
.nm { color: #00d4e8; font-size: 29px; font-weight: bold; }
.code { color: #a8a8a8; font-size: 21px; font-weight: bold; margin-left: 4px; letter-spacing: 0.5px; }
.p-price { height: 38px; display: flex; align-items: center; color: #00e400; font-weight: bold; position: relative; }
.last { font-size: 28px; width: 122px; }
.tri { flex: none; margin-top: 2px; }
.chg { font-size: 29px; width: 90px; }
.pct { font-size: 29.500px; }
.lb { color: #b8b8b8; font-size: 23px; white-space: nowrap; }
.lb em { font-size: 20px; margin-left: 5px; color: #aaa; }
.q-row, .s-row, .f-row, .t-row { display: flex; align-items: center; font-weight: bold; box-sizing: border-box; }
.q-row { height: 27px; padding-top: 1px; }
.q-row .lb, .s-row .lb, .f-row .lb { font-weight: normal; }
.q-row .lb { width: 107px; }
.pr { color: #00e400; font-size: 21px; width: 80px; letter-spacing: .3px; }
.vol { color: #c8c800; font-size: 21px; width: 141px; text-align: right; flex: none; margin-left: -1px; }
u { font-weight: normal; font-size: 22px; }
.p-quote { height: 135px; }
.p-quote.sec { height: 137px; box-sizing: border-box; padding-top: 1px; }
.p-split { display: flex; height: 2px; margin: 0 0 0 -3px; }
.p-split i { width: 110px; background: #a87020; }
.p-split b { flex: 1; background: #206aa8; }
.p-stats { height: 145px; box-sizing: border-box; padding-top: 2px; }
.p-stats.short { height: 93px; padding-top: 2px; }
.s-row { height: 28.500px; padding-top: 5px; }
.p-stats .v1 { width: 100px; text-align: right; font-size: 21px; flex: none; margin-left: 0; }
.s-row .lb:first-child { width: 60px; }
.s-row .l2 { margin-left: 7px; width: 55px; }
.v2 { width: 104px; text-align: right; font-size: 21px; flex: none; }
.g { color: #00e400; }
.n { color: #b0b0b0; }
.m { color: #c000c0; }
.r { color: #ff3030; }
.p-flows { height: 120px; box-sizing: border-box; padding-top: 2px; }
.f-row { height: 28.400px; padding-top: 6px; }
.f-row .lb { width: 137px; font-size: 24px; letter-spacing: -.2px; flex: none; }
.f-bar { width: 40px; display: flex; align-items: center; flex: none; }
.f-bar i { height: 11px; background: #00e400; }
.f-val { color: #00e400; font-size: 21px; width: 91px; text-align: right; flex: none; white-space: nowrap; }
.f-pct { color: #00e400; font-size: 22px; width: 63px; text-align: right; flex: none; }
.p-ticks { border-bottom: none; padding-top: 1px; }
.t-row { height: 27px; font-size: 20.500px; padding-top: 5px; }
.tm { color: #b8b8b8; width: 103px; flex: none; }
.tp { color: #00e400; width: 80px; flex: none; }
.tv { color: #c8c800; width: 65px; text-align: right; flex: none; white-space: nowrap; }
.ts { width: 18px; margin-left: 17px; flex: none; font-weight: normal; font-size: 22px; }
.S { color: #00d000; font-weight: bold; }
.B { color: #f03030; }
.tc { width: 43px; color: #8c8c8c; text-align: right; flex: none; }

.sidebar { flex: 1; background: #f0f0f0; border-left: 1px solid #c8c8c8; height: 1252px; position: relative; }
.slot {
  height: 34.400px;
  box-sizing: border-box;
  display: flex;
  align-items: center;
  justify-content: center;
}
.slot svg { width: 28px; height: 28px; }
.out { fill: #fff; stroke: #5a9ce8; stroke-width: 1.8; stroke-linejoin: round; }
.fr { fill: #fff; stroke: #5a9ce8; stroke-width: 1.8; }
.ic-t { fill: #2a50b8; font-size: 14px; text-anchor: middle; }
.ic-f { fill: #2050a0; font-size: 11px; font-style: italic; text-anchor: middle; }
.ic-rsi { fill: #3a58b8; font-size: 14px; font-weight: bold; text-anchor: middle; }
.ic-s { fill: #c82828; font-size: 20px; font-weight: bold; text-anchor: middle; }
.divider { height: 14px; display: flex; align-items: center; margin: 0 2px; }
.divider::after { content: ""; flex: 1; height: 2px; background: #b0b0b0; }
.divider.small { height: 12px; }
.txt { color: #2a50a8; font-size: 17px; padding-top: 4px; }
.cn { font-size: 18px; padding-top: 5px; }
.day { font-size: 18px; background: #f8f8f8; border-top: 2px solid #aaa; border-left: 2px solid #aaa; }

.statusbar {
  flex: none;
  height: 36px;
  box-sizing: border-box;
  padding-top: 3px;
  background: #f0f0f0;
  display: flex;
  align-items: center;
  font-size: 21px;
  white-space: nowrap;
}
.st-icon {
  width: 21px;
  height: 22px;
  margin: 0 4px 0 0;
  background: #f0a020;
  box-sizing: border-box;
  border: 2px solid #e08810;
  padding: 4px 3px;
  flex: none;
}
.st-icon i { display: block; height: 100%; background: #fce080; }
.statusbar span { flex: none; }
.statusbar .cn { font-size: 23.500px; color: #222; }
.up { color: #008c00; }
.bk { color: #111; }

.banner {
  position: absolute;
  left: 1080px;
  top: 1286px;
  width: 1080px;
  height: 109px;
  background: rgba(127, 172, 217, 0.96);
  display: flex;
  align-items: center;
}
.b-cn {
  margin-left: 21px;
  width: 378px;
  flex: none;
  color: #1a0c8c;
  font-size: 75px;
  font-weight: 900;
  font-family: "Noto Sans CJK SC", sans-serif;
  white-space: nowrap;
  -webkit-text-stroke: 1px #1a0c8c;
}
.b-logo { margin-left: 34px; flex: none; }
.b-arc { fill: #fff; font-size: 11px; font-weight: bold; }
.b-url {
  margin-left: 37px;
  color: #fcfcfc;
  font-family: "DejaVu Serif", serif;
  font-weight: bold;
  font-size: 72px;
  letter-spacing: -1px;
  white-space: nowrap;
}
</style>
